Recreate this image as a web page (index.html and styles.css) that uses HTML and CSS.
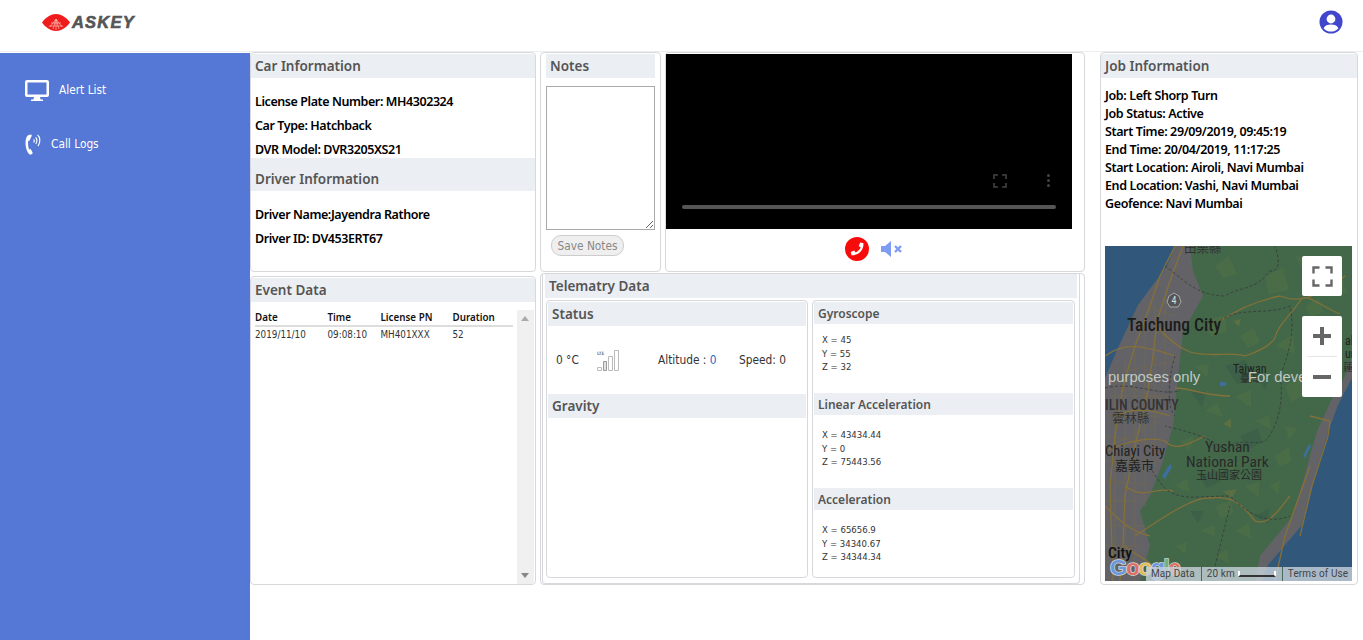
FILE: index.html
```html
<!DOCTYPE html>
<html lang="en">
<head>
<meta charset="utf-8">
<title>Askey Dashboard</title>
<link rel="stylesheet" href="styles.css">
</head>
<body>
<header class="topbar">
  <div class="logo">
    <svg class="logo-mark" viewBox="0 0 28 17" width="28" height="17">
      <path d="M0 8.500C4 3 9 0 14 0s10 3 14 8.500C24 14 19 17 14 17S4 14 0 8.500z" fill="#ee1c1c"/>
      <path d="M14 5L8 13M14 5l-3 10M14 5v11M14 5l3 10M14 5l6 8M9 9h10M7 12h14" stroke="#ffb9b0" stroke-width=".7" fill="none"/>
    </svg>
    <span class="logo-text">ASKEY</span>
  </div>
  <svg class="user-icon" viewBox="0 0 24 24" width="24" height="24">
    <circle cx="12" cy="12" r="11.500" fill="#4147cc"/>
    <circle cx="12" cy="9" r="4.400" fill="#fff"/>
    <path d="M4.600 18.200c1.200-2.600 4-3.600 7.400-3.600s6.200 1 7.400 3.600C17.600 20.500 15 21.600 12 21.600s-5.600-1.100-7.400-3.400z" fill="#fff"/>
  </svg>
</header>
<div class="shell">
  <nav class="sidebar">
    <a class="nav-item nav-alert">
      <svg viewBox="0 0 24 21" width="24" height="21"><path d="M2 0h20a2 2 0 0 1 2 2v13a2 2 0 0 1-2 2h-7l.6 2.500H18V21H6v-1.500h2.400L9 17H2a2 2 0 0 1-2-2V2a2 2 0 0 1 2-2zm.5 2.500v12h19v-12z" fill="#fff" fill-rule="evenodd"/></svg>
      <span>Alert List</span>
    </a>
    <a class="nav-item nav-call">
      <svg viewBox="0 0 16 22" width="16" height="22"><path d="M6 1.500L3.500 2C1.500 3 .5 6 .5 10s1.500 9 3.500 11c.8.800 1.800.800 2.500.300l.8-.6c.4-.3.4-.8.200-1.200l-1.500-3c-.2-.4-.6-.5-1-.3l-.8.400C3.200 14.500 2.800 11 3.200 8l.9-.2c.4-.1.700-.4.700-.8L6.700 3c.1-.7-.1-1.400-.7-1.500z" fill="#fff"/><path d="M8.500 6.500c1 .5 1 2 .2 3M10.500 4.500c1.800 1 1.800 4.500.3 6.500M12.500 2c3 2 3 8 .5 11" stroke="#fff" stroke-width="1.200" fill="none"/></svg>
      <span>Call Logs</span>
    </a>
  </nav>
  <main class="content">
    <div class="left-area">
      <div class="row-top">
        <section class="panel car-panel">
          <h2 class="bar">Car Information</h2>
          <div class="facts">
            <p>License Plate Number: MH4302324</p>
            <p>Car Type: Hatchback</p>
            <p>DVR Model: DVR3205XS21</p>
          </div>
          <h2 class="bar bar-driver">Driver Information</h2>
          <div class="facts facts-driver">
            <p>Driver Name:Jayendra Rathore</p>
            <p>Driver ID: DV453ERT67</p>
          </div>
        </section>
        <section class="panel notes-panel">
          <h2 class="bar">Notes</h2>
          <textarea class="notes-input" aria-label="Notes"></textarea>
          <button class="save-btn" type="button">Save Notes</button>
        </section>
        <section class="panel video-panel">
          <div class="video">
            <svg class="vid-full" viewBox="-1 -1 14 14" width="14" height="14"><path d="M0 4V0h4M8 0h4v4M12 8v4H8M4 12H0V8" stroke="#444" stroke-width="1.600" fill="none"/></svg>
            <span class="vid-dots"><i></i><i></i><i></i></span>
            <div class="vid-track"></div>
          </div>
          <div class="call-controls">
            <svg viewBox="0 0 24 24" width="24" height="24"><circle cx="12" cy="12" r="12" fill="#f80b0b"/><path d="M18.500 6.300L15.200 5.500l-1.500 3.500 2 1.500c-.9 2-2.700 3.900-5 5l-1.600-2-3.400 1.500.8 3.300c7.200.3 12.300-5.300 12-12z" fill="#fff"/></svg>
            <svg viewBox="0 0 22 16" width="22" height="16"><path d="M0 5h4l6-5v16l-6-5H0z" fill="#7f9cf5"/><path d="M14 5l6 6M20 5l-6 6" stroke="#7f9cf5" stroke-width="2.400"/></svg>
          </div>
        </section>
      </div>
      <div class="row-bottom">
        <section class="panel event-panel">
          <h2 class="bar">Event Data</h2>
          <div class="event-body">
            <div class="event-table">
              <div class="event-row event-head"><span>Date</span><span>Time</span><span>License PN</span><span>Duration</span></div>
              <div class="event-row"><span>2019/11/10</span><span>09:08:10</span><span>MH401XXX</span><span>52</span></div>
            </div>
            <div class="scrollbar"><i class="arrow-up"></i><i class="arrow-down"></i></div>
          </div>
        </section>
        <section class="panel telem-panel">
          <div class="telem-inner">
            <h2 class="bar">Telematry Data</h2>
            <div class="telem-grid">
              <div class="panel sub-panel">
                <h3 class="bar">Status</h3>
                <div class="status-row">
                  <span class="temp">0 °C</span>
                  <svg class="signal" viewBox="0 0 22 21" width="22" height="21">
                    <text x="0" y="4.500" class="lte">LTE</text>
                    <path d="M.5 17.500h4v3h-4zM11.500 6.500h4v14h-4zM17.500.5h4v20h-4z" fill="#fff" stroke="#bbb"/>
                    <path d="M6.500 11.500h3v9h-3z" fill="#e2e2e2" stroke="#999"/>
                  </svg>
                  <span class="alt">Altitude : <b>0</b></span>
                  <span class="speed">Speed: 0</span>
                </div>
                <h3 class="bar">Gravity</h3>
              </div>
              <div class="panel sub-panel sensors">
                <h3 class="bar small">Gyroscope</h3>
                <div class="vals"><p>X = 45</p><p>Y = 55</p><p>Z = 32</p></div>
                <h3 class="bar small">Linear Acceleration</h3>
                <div class="vals"><p>X = 43434.44</p><p>Y = 0</p><p>Z = 75443.56</p></div>
                <h3 class="bar small">Acceleration</h3>
                <div class="vals"><p>X = 65656.9</p><p>Y = 34340.67</p><p>Z = 34344.34</p></div>
              </div>
            </div>
          </div>
        </section>
      </div>
    </div>
    <section class="panel job-panel">
      <h2 class="bar">Job Information</h2>
      <div class="job-facts">
        <p>Job: Left Shorp Turn</p>
        <p>Job Status: Active</p>
        <p>Start Time: 29/09/2019, 09:45:19</p>
        <p>End Time: 20/04/2019, 11:17:25</p>
        <p>Start Location: Airoli, Navi Mumbai</p>
        <p>End Location: Vashi, Navi Mumbai</p>
        <p>Geofence: Navi Mumbai</p>
      </div>
      <div class="map">
        <svg class="map-art" viewBox="0 0 247 335" width="247" height="335">
          <rect width="247" height="335" fill="#31587a"/>
          <path d="M70 0L62 20 33 59 13 102 0 132V335H157L163 319 197 279 207 239 223 186 233 159 247 132V0z" fill="#636367"/>
          <path d="M85 0L88 25 98 50 78 86 72 140 68 180 58 215 45 250 35 265 45 300 35 335H150L155 310 188 270 198 235 212 185 226 155 240 130 247 110V0z" fill="#426849"/>
          <g fill="#4a6d47">
            <path d="M160 30l18-8 6 22-20 4zM110 20l14-10 8 18-14 4zM190 10l18 4-8 14zM220 40l16-12 6 20z"/>
            <path d="M100 75l20-6 2 16-16 6zM135 90l14-8 6 14-12 6zM200 60l14-8 4 14-12 6zM170 100l18-12 2 20zM210 100l14-6-6 20z"/>
            <path d="M90 120l14-2-2 14zM130 150l16-6 0 18zM180 140l18-10 4 18-16 8zM100 165l12-8 6 14zM150 175l14-6 2 14z"/>
            <path d="M75 195l14-4-4 14zM120 215l14 2-8 12zM170 210l14-10 2 16-12 4zM180 180l12 2-8 12zM70 240l12-8 2 14z"/>
            <path d="M110 260l16-6 2 14-12 4zM140 240l14-4 0 16zM165 240l10-6-2 14zM95 285l14-6 2 12zM130 285l14-8 2 16zM70 300l12-4-2 12zM110 310l12-6 2 14z"/>
          </g>
          <g fill="#3c6148">
            <path d="M120 120l20-6 8 18-16 6zM85 145l16 0-4 16zM150 130l16-2-6 16zM135 190l18-8 4 14-14 8zM95 230l16-6 4 12-14 6zM150 270l14-8 0 16zM85 265l14 0-6 12z"/>
          </g>
          <g fill="#6f7640" opacity=".55">
            <path d="M118 245l14-2-6 10zM220 30l10-2-4 10zM128 75l8-2-2 8zM118 178l8-6 0 10z"/>
          </g>
          <g fill="none" stroke="#75694a" stroke-width=".6">
            <path d="M5 150h60M2 170h55M0 190l50 8M0 215h50M0 235l45 4M0 255h35M0 280h40M0 300h35M10 130v200M20 115v215M30 100v235M40 80v180M50 60v170M60 50v90"/>
            <path d="M30 75l40 20M40 60l30 10M20 125l50-10M15 140l50 15M5 200l50-25"/>
          </g>
          <g fill="none" stroke="#85703a" stroke-width="1.300">
            <path d="M70 0L55 30 45 60 30 100 18 140 10 190 5 240 8 335"/>
            <path d="M78 0L65 35 52 75 48 110 42 150 30 200 20 250 18 300 15 335"/>
            <path d="M52 80C60 90 70 100 85 106 105 112 125 105 140 110 155 105 165 100 170 92 172 80 185 70 195 55 200 45 215 60 235 68"/>
            <path d="M115 75C130 65 150 55 175 50 195 58 215 50 240 30"/>
            <path d="M70 142C85 142 100 150 125 150"/>
            <path d="M10 170C30 160 50 165 65 170M0 205C25 195 45 190 60 195 70 205 80 200 100 190M20 240C40 255 50 240 68 245"/>
            <path d="M30 290C60 270 90 250 105 252 125 250 135 255 150 275 165 280 175 262 185 250"/>
            <path d="M205 170L225 175 223 190 207 240 195 290M170 335L180 290 205 220"/>
            <path d="M0 110C20 95 40 100 70 110M0 260C15 275 25 285 45 290M20 300C30 310 50 315 60 335"/>
          </g>
          <g fill="none" stroke="#383838" stroke-width=".8" stroke-dasharray="3 2">
            <path d="M60 20C75 30 90 50 120 50 135 40 150 45 165 25 175 25 175 15 170 0"/>
            <path d="M115 75C135 60 160 70 185 60 190 85 185 105 175 130 180 160 170 185 160 195 150 200 130 190 120 205 105 190 80 185 60 180"/>
            <path d="M70 110C65 125 60 160 70 170M0 142C30 135 50 150 75 145"/>
            <path d="M45 220C65 260 80 250 125 250 140 265 160 280 185 270M110 320L125 260"/>
          </g>
          <g fill="#3c6fa0"><path d="M57 230l8-12 2 3-7 12zM198 210l6-12 2 2-6 12zM115 136h6v4h-6z"/></g>
          <path d="M69 47l5 3 2 6-3 5h-8l-3-5 2-6z" fill="#555" stroke="#bbb" stroke-width=".8"/>
          <text x="66.500" y="58" class="map-shield">4</text>
          <text x="79" y="7" class="map-cjk3">田栗縣</text>
          <text x="22" y="85" class="map-city">Taichung City</text>
          <text x="240" y="99" class="map-small">ali</text>
          <text x="240" y="112" class="map-small">ur</text>
          <text x="238" y="125" class="map-cjk">蓮</text>
          <text x="128" y="127" class="map-small">Taiwan</text>
          <text x="135" y="136" class="map-cjk">臺灣</text>
          <text x="3" y="136" class="map-water">purposes only</text>
          <text x="143" y="136" class="map-water">For developer</text>
          <text x="0" y="164" class="map-county">ILIN COUNTY</text>
          <text x="7" y="177" class="map-cjk3">雲林縣</text>
          <text x="0" y="210" class="map-mid">Chiayi City</text>
          <text x="10" y="224" class="map-cjk2">嘉義市</text>
          <text x="100" y="206" class="map-mid2">Yushan</text>
          <text x="81" y="221" class="map-mid2">National Park</text>
          <text x="91" y="233" class="map-cjk4">玉山國家公園</text>
          <text x="3" y="312" class="map-mid2 map-dark">City</text>
          <text x="5" y="329" class="map-google"><tspan fill="#6a97de">G</tspan><tspan fill="#dc6f66">o</tspan><tspan fill="#e2bd55">o</tspan><tspan fill="#6a97de">g</tspan><tspan fill="#74ad7e">l</tspan><tspan fill="#dc6f66">e</tspan></text>
        </svg>
        <div class="map-btn map-full">
          <svg viewBox="-1.500 -1.500 21 21" width="21" height="21"><path d="M0 6V0h6M12 0h6v6M18 12v6h-6M6 18H0v-6" fill="none" stroke="#666" stroke-width="2.400"/></svg>
        </div>
        <div class="map-zoom">
          <div class="zoom-half"><svg viewBox="0 0 18 18" width="18" height="18"><path d="M9 0v18M0 9h18" stroke="#666" stroke-width="4"/></svg></div>
          <div class="zoom-half zoom-minus"><svg viewBox="0 0 18 18" width="18" height="18"><path d="M0 9h18" stroke="#666" stroke-width="4"/></svg></div>
        </div>
        <div class="map-foot">
          <span>Map Data</span>
          <span class="scale">20 km <i class="scale-bar"></i></span>
          <span>Terms of Use</span>
        </div>
      </div>
    </section>
  </main>
</div>
</body>
</html>
```
FILE: styles.css
```css
* { box-sizing: border-box; }
html, body { margin: 0; height: 100%; overflow: hidden; background: #fff; }
body { font-family: "DejaVu Sans Condensed", "DejaVu Sans", sans-serif; font-stretch: condensed; color: #000; }
p, h2, h3 { margin: 0; }

.topbar { height: 52px; display: flex; align-items: center; justify-content: space-between; padding: 0 20px 2px 42px; border-bottom: 1px solid #eee; }
.logo { display: flex; align-items: center; gap: 2px; margin-top: -4px; }
.logo-mark { display: block; }
.logo-text { font: italic 700 16.500px "Liberation Sans", sans-serif; letter-spacing: 1.200px; color: #555; -webkit-text-stroke: .6px #555; }
.user-icon { display: block; margin-top: -6px; }

.shell { display: flex; height: 588px; }
.sidebar { width: 250px; flex: none; background: #5577d5; margin-top: 1px; padding-top: 26px; }
.nav-item { display: flex; align-items: center; color: #fff; font-size: 11.800px; padding-left: 25px; }
.nav-alert { height: 22px; gap: 10px; margin-bottom: 32px; }
.nav-call { height: 22px; gap: 10px; }

.content { flex: 1; display: flex; gap: 15px; padding-right: 5px; }
.left-area { width: 835px; flex: none; display: flex; flex-direction: column; gap: 1px; }
.row-top { display: flex; gap: 4px; height: 220px; }
.row-bottom { display: flex; gap: 4px; height: 312px; }

.panel { border: 1px solid #d6d8dc; border-radius: 4px; background: #fff; padding: 1px 0; }
.bar { background: #ebeef3; color: #555; font-family: "Noto Sans", sans-serif; font-size: 13.500px; font-weight: 600; height: 24px; line-height: 24px; padding-left: 4px; }
.bar.small { font-size: 12px; height: 22px; line-height: 24px; }

.car-panel { width: 286px; }
.facts { padding: 12px 4px 0; font-family: "Noto Sans", sans-serif; font-size: 12.500px; font-weight: 600; letter-spacing: -.42px; height: 80px; }
.facts p { height: 24px; line-height: 24px; }
.bar-driver { height: 33px; line-height: 42px; }
.facts-driver { height: auto; }

.notes-panel { width: 121px; padding: 1px 5px; display: flex; flex-direction: column; align-items: flex-start; }
.notes-panel .bar { width: 109px; flex: none; }
.notes-input { width: 109px; height: 144px; flex: none; margin: 8px 0 5px; border: 1px solid #aaa; padding: 2px; background: #fff; }
.save-btn { margin-left: 5px; width: 73px; height: 21px; border-radius: 10px; border: 1px solid #ccc; background: #efefef; color: #888; font: 11.800px "DejaVu Sans Condensed", "DejaVu Sans", sans-serif; font-stretch: condensed; padding: 0; }

.video-panel { width: 420px; padding: 1px 12px 0 0; }
.video { height: 175px; background: #000; position: relative; }
.vid-full { position: absolute; left: 327px; top: 120px; }
.vid-dots { position: absolute; left: 381px; top: 120px; display: flex; flex-direction: column; gap: 2px; }
.vid-dots i { width: 3px; height: 3px; border-radius: 50%; background: #444; }
.vid-track { position: absolute; left: 16px; right: 16px; top: 151px; height: 4px; border-radius: 2px; background: #555; }
.call-controls { height: 40px; display: flex; align-items: center; gap: 12px; padding-left: 179px; }

.event-panel { width: 286px; margin-top: 3px; height: 309px; }
.event-body { display: flex; padding: 8px 0 0 4px; height: 282px; }
.event-table { width: 258px; font-size: 9.800px; }
.event-row { display: grid; grid-template-columns: 72.500px 53px 72px 1fr; height: 16px; line-height: 15px; }
.event-head { font-family: "Noto Sans", sans-serif; font-weight: 600; border-bottom: 2px solid #ddd; height: 17px; color: #111; }
.event-row:not(.event-head) { color: #333; }
.scrollbar { width: 17px; margin-left: 4px; background: #f0f0f0; position: relative; }
.arrow-up, .arrow-down { position: absolute; left: 4px; width: 0; height: 0; border-left: 4px solid transparent; border-right: 4px solid transparent; }
.arrow-up { top: 6px; border-bottom: 5px solid #aaa; }
.arrow-down { bottom: 6px; border-top: 5px solid #888; }

.telem-panel { width: 545px; height: 312px; padding: 0 1px; }
.telem-inner { width: 538px; height: 310px; border: 1px solid #d6d8dc; border-top: 0; border-radius: 0 0 4px 4px; padding: 0 2px; }
.telem-grid { display: flex; gap: 4px; padding: 2px 0 0 1px; width: 540px; }
.sub-panel { width: 262px; height: 278px; padding: 1px; }
.sensors { width: 263px; }
.status-row { height: 68px; display: flex; align-items: center; font-size: 11.800px; color: #333; padding-left: 8px; }
.temp { width: 41px; }
.signal { display: block; width: 22px; margin-right: 39px; }
.lte { font-size: 4.500px; font-weight: 700; fill: #888; }
.alt { width: 81px; color: #333; }
.alt b { font-weight: 400; color: #2266cc; }
.vals { height: 69px; padding: 9px 0 0 8px; font-size: 9.500px; color: #333; }
.vals p { height: 13.500px; line-height: 13.500px; }
.vals + .bar + .vals { height: 73px; padding-top: 13px; }

.job-panel { width: 258px; height: 533px; }
.job-facts { height: 168px; padding: 9px 4px 0; font-family: "Noto Sans", sans-serif; font-size: 12.500px; font-weight: 600; letter-spacing: -.38px; line-height: 18px; }
.map { width: 247px; height: 335px; margin-left: 4px; position: relative; overflow: hidden; }
.map-art { display: block; }
.map-art text { font-family: Roboto, "Noto Sans CJK TC", sans-serif; fill: #222; }
.map-art .map-city { font-size: 17.500px; font-weight: 500; fill: #1c1c1c; }
.map-art .map-small { font-size: 12px; }
.map-art .map-shield { font-size: 10px; fill: #ddd; }
.map-art .map-cjk { font-size: 10px; fill: #2a2a2a; font-family: "Noto Sans CJK TC", sans-serif; }
.map-art .map-cjk2 { font-size: 13px; fill: #222; font-family: "Noto Sans CJK TC", sans-serif; }
.map-art .map-cjk3 { font-size: 12.500px; fill: #333; font-family: "Noto Sans CJK TC", sans-serif; }
.map-art .map-cjk4 { font-size: 11px; fill: #2a2a2a; font-family: "Noto Sans CJK TC", sans-serif; }
.map-art .map-water { font-size: 14.800px; fill: #c2c9c2; font-family: "Liberation Sans", sans-serif; }
.map-art .map-county { font-size: 14px; font-weight: 500; fill: #333; }
.map-art .map-mid { font-size: 14.500px; fill: #222; }
.map-art .map-mid2 { font-size: 15.500px; fill: #2a2a2a; }
.map-art .map-dark { font-weight: 500; fill: #111; }
.map-art .map-google { font-family: "Liberation Sans", sans-serif; font-size: 22px; font-weight: 700; letter-spacing: -1px; paint-order: stroke; stroke: rgba(255,255,255,.75); stroke-width: 1.500px; }
.map-btn { position: absolute; left: 197px; top: 10px; width: 40px; height: 40px; background: #fff; border-radius: 2px; display: flex; align-items: center; justify-content: center; }
.map-zoom { position: absolute; left: 197px; top: 70px; width: 40px; height: 81px; background: #fff; border-radius: 2px; }
.zoom-half { height: 40px; display: flex; align-items: center; justify-content: center; }
.zoom-minus { height: 41px; border-top: 1px solid #e6e6e6; margin: 0 5px; }
.map-foot { position: absolute; left: 41px; right: 0; bottom: 0; height: 14px; display: flex; background: rgba(200, 210, 220, .8); font: 10px/14px Roboto, sans-serif; color: #444; letter-spacing: .1px; }
.map-foot span { padding: 0 6px 0 5px; border-right: 1px solid #4a6a5a; white-space: nowrap; display: flex; align-items: center; gap: 3px; }
.map-foot span:last-child { border: 0; padding-right: 0; }
.scale-bar { display: block; width: 38px; height: 6px; border: 2px solid #fff; border-top: 0; border-bottom-color: #333; }
```
